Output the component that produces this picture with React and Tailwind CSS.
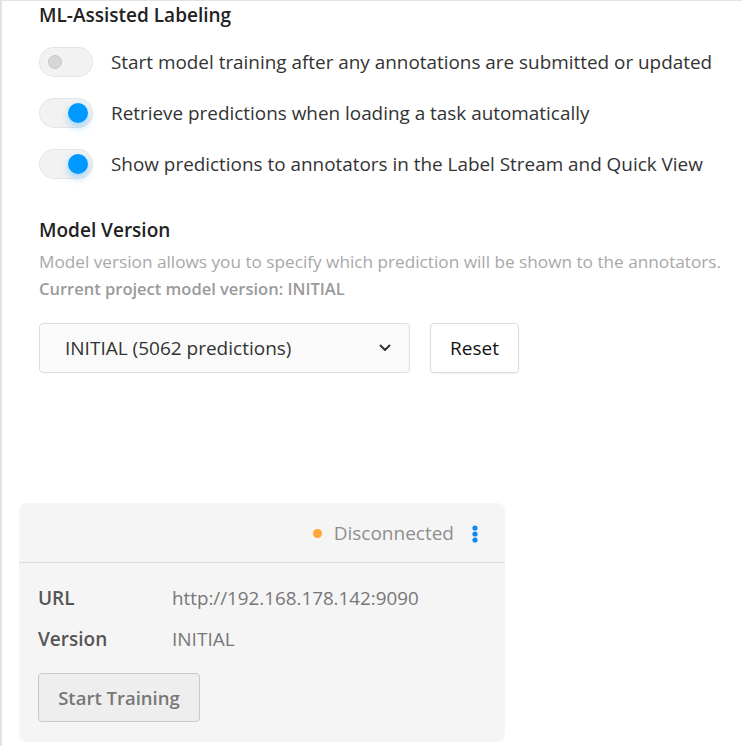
import React from 'react';

const font = { fontFamily: '"Open Sans", "Noto Sans", sans-serif' };

const Toggle = ({ on }) => (
    <div className="relative h-[30px] w-[54px] shrink-0 rounded-full bg-[#f2f2f2] shadow-[inset_0_0_0_1px_rgba(0,0,0,0.05)]">
        {on ? (
            <div className="absolute right-[5px] top-[5px] h-[20px] w-[20px] rounded-full bg-[#0099ff] shadow-[0_4px_8px_rgba(0,153,255,0.35)]" />
        ) : (
            <div className="absolute left-[9px] top-[8px] h-[14px] w-[14px] rounded-full border border-[#c8c8c8] bg-[#d6d6d6]" />
        )}
    </div>
);

const ToggleRow = ({ on, label }) => (
    <div className="flex h-[30px] items-center gap-[18px]">
        <Toggle on={on} />
        <span className="whitespace-nowrap text-[18.9px] text-[#333]">{label}</span>
    </div>
);

export default function App() {
    return (
        <div style={font} className="h-[746px] w-[742px] overflow-hidden border-l-2 border-t border-[#e3e3e3] bg-white">
            <div className="pl-[37px]">
                <h2 className="pt-[2px] text-[19px] font-semibold leading-[24px] text-[#222]">ML-Assisted Labeling</h2>

                <div className="mt-[20px] flex flex-col gap-[21px]">
                    <ToggleRow on={false} label="Start model training after any annotations are submitted or updated" />
                    <ToggleRow on label="Retrieve predictions when loading a task automatically" />
                    <ToggleRow on label="Show predictions to annotators in the Label Stream and Quick View" />
                </div>

                <h3 className="mt-[39px] text-[19px] font-semibold leading-[24px] text-[#222]">Model Version</h3>
                <p className="mt-[9px] whitespace-nowrap text-[17.2px] leading-[22px] text-[#a8a8a8]">
                    Model version allows you to specify which prediction will be shown to the annotators.
                </p>
                <p className="mt-[6px] text-[16.5px] font-semibold leading-[20px] text-[#9a9a9a]">
                    Current project model version: INITIAL
                </p>

                <div className="mt-[24px] flex gap-[20px]">
                    <div className="flex h-[50px] w-[371px] items-center justify-between rounded-[4px] border border-[#dedede] bg-[#fafafa] pl-[25px] pr-[18px]">
                        <span className="text-[19px] text-[#333]">INITIAL (5062 predictions)</span>
                        <svg width="12" height="8" viewBox="0 0 12 8" fill="none">
                            <path d="M1.5 1.5 6 6l4.5-4.5" stroke="#333" strokeWidth="2" strokeLinecap="round" strokeLinejoin="round" />
                        </svg>
                    </div>
                    <button className="h-[50px] w-[89px] rounded-[4px] border border-[#dcdcdc] bg-white text-[19px] font-medium text-[#111] shadow-[0_1px_2px_rgba(0,0,0,0.06)]">
                        Reset
                    </button>
                </div>
            </div>

            <div className="ml-[17px] mt-[130px] w-[486px] rounded-[8px] bg-[#f5f5f5]">
                <div className="flex h-[60px] items-center justify-end border-b border-[#dcdcdc] pr-[27px] pt-[2px]">
                    <span className="mr-[12px] h-[9px] w-[9px] rounded-full bg-[#ffa53a]" />
                    <span className="text-[19px] text-[#8f8f8f]">Disconnected</span>
                    <svg className="ml-[18px]" width="6" height="18" viewBox="0 0 6 18">
                        <circle cx="3" cy="3" r="2.6" fill="#0b8cf5" />
                        <circle cx="3" cy="9" r="2.6" fill="#0b8cf5" />
                        <circle cx="3" cy="15" r="2.6" fill="#0b8cf5" />
                    </svg>
                </div>
                <div className="px-[19px] pb-[20px] pt-[22px]">
                    <div className="flex h-[26px] items-center text-[19px]">
                        <span className="w-[134px] font-semibold text-[#555]">URL</span>
                        <span className="text-[18.8px] text-[#777]">http://192.168.178.142:9090</span>
                    </div>
                    <div className="mt-[15px] flex h-[26px] items-center text-[19px]">
                        <span className="w-[134px] font-semibold text-[#555]">Version</span>
                        <span className="text-[#777]">INITIAL</span>
                    </div>
                    <button className="mt-[21px] h-[49px] w-[162px] rounded-[4px] border border-[#c9c9c9] bg-[#eeeeee] text-[18.5px] font-semibold text-[#777]">
                        Start Training
                    </button>
                </div>
            </div>
        </div>
    );
}
